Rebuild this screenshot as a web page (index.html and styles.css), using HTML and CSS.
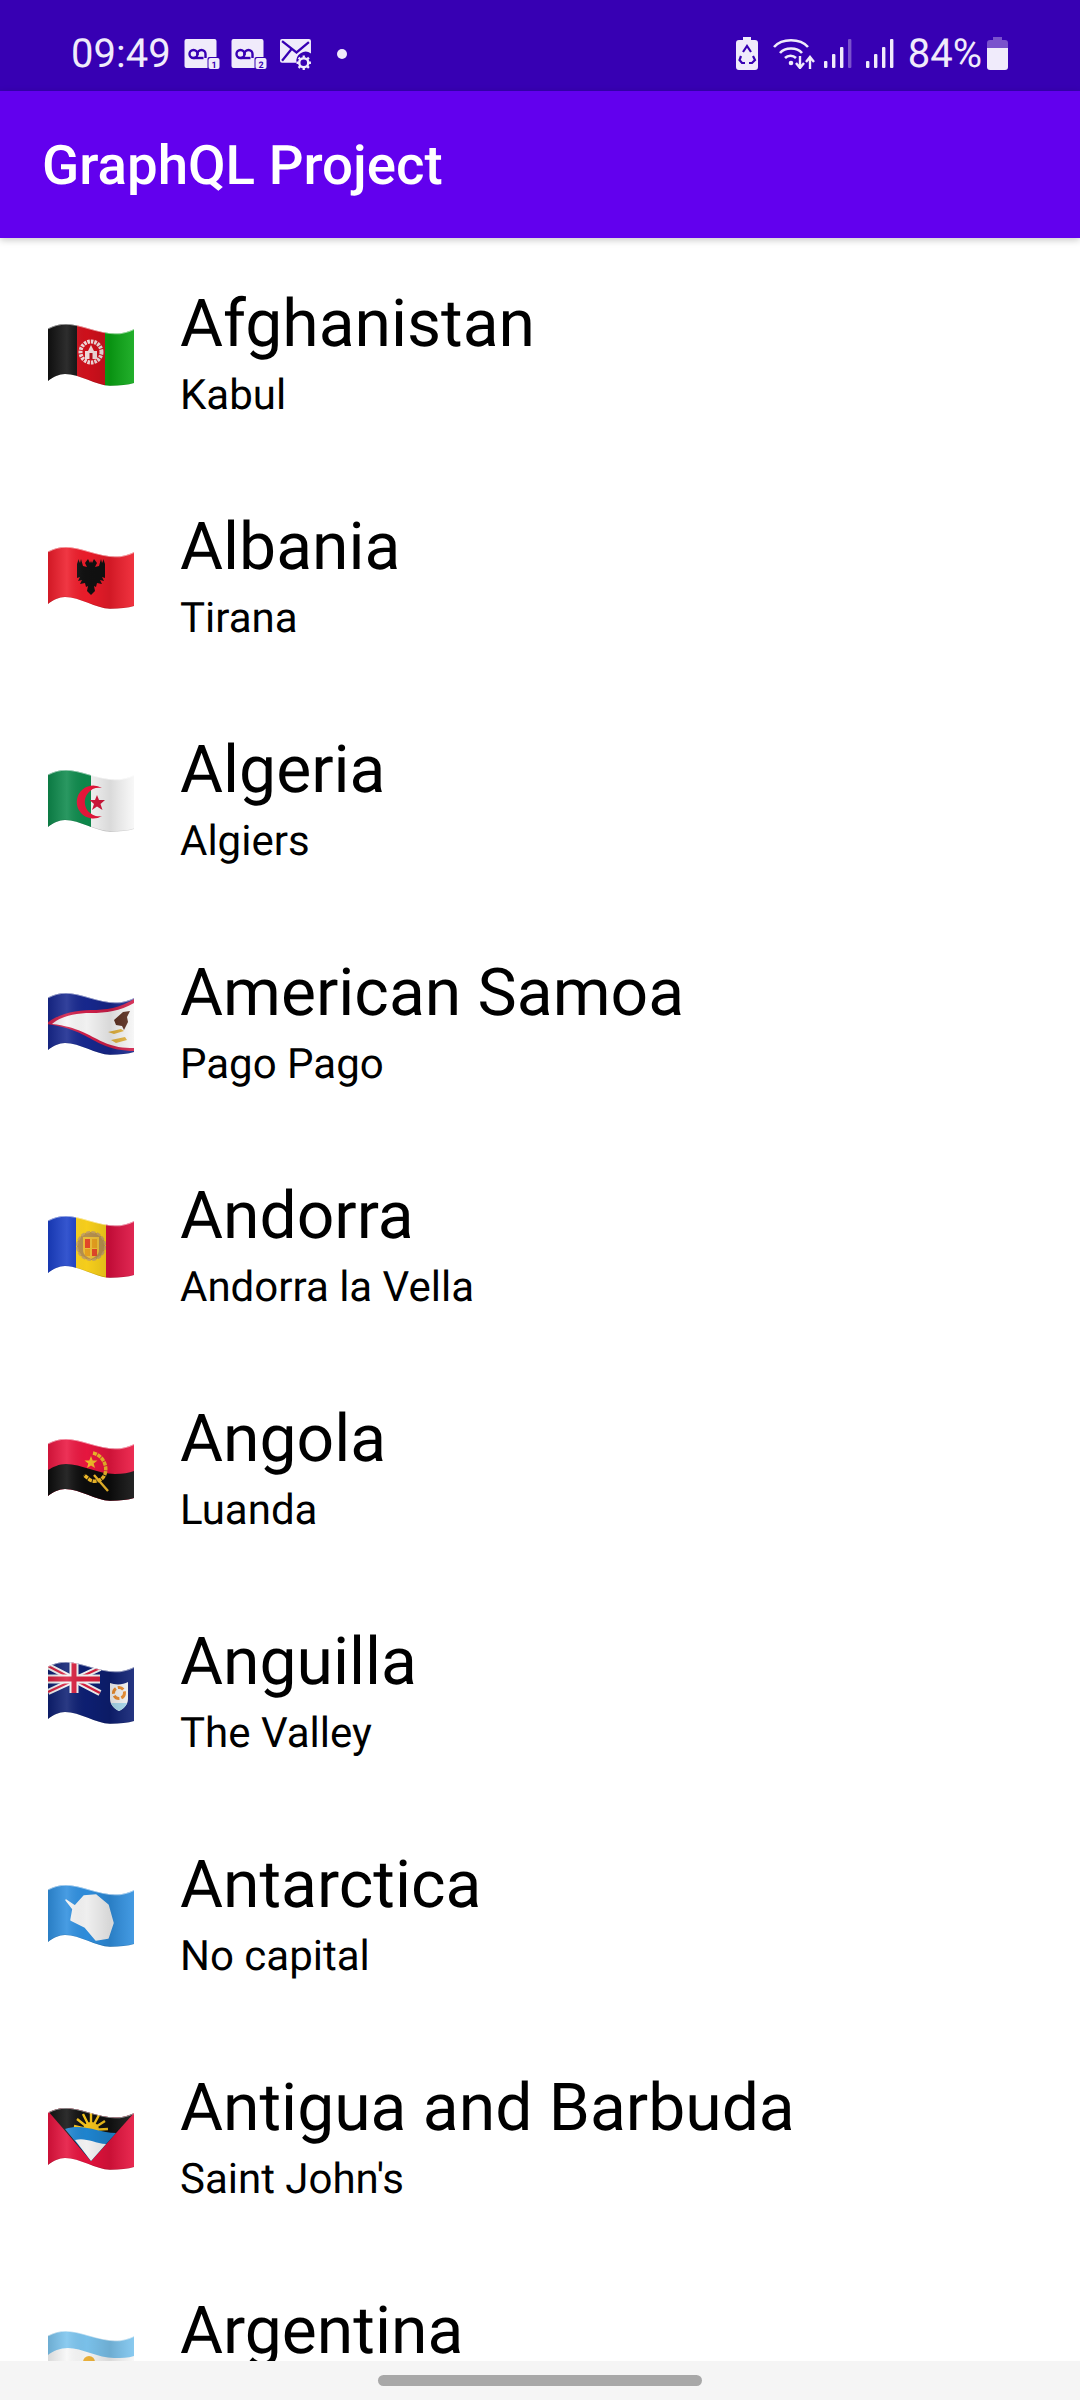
FILE: index.html
```html
<!DOCTYPE html>
<html lang="en">
<head>
    <meta charset="UTF-8">
    <meta name="viewport" content="width=device-width, initial-scale=1.0">
    <title>GraphQL Project</title>
    <link rel="stylesheet" href="styles.css">
</head>
<body>
    <!-- shared flag shape and folds -->
    <svg class="defs" aria-hidden="true">
        <defs>
            <clipPath id="wave">
                <path d="M0 5.5C5 3 11 1 18 1C33 1 50 10.5 67 10.5C75 10.5 81 8.500 86 6V60C80 62 72 62.7 62 62.7C48 62.7 32 51 17 51C11 51 5 54 0 58Z"/>
            </clipPath>
            <linearGradient id="folds" x1="0" x2="1" y1="0" y2="0">
                <stop offset="0" stop-color="#000" stop-opacity=".12"/>
                <stop offset=".22" stop-color="#fff" stop-opacity=".12"/>
                <stop offset=".45" stop-color="#000" stop-opacity=".02"/>
                <stop offset=".72" stop-color="#000" stop-opacity=".12"/>
                <stop offset="1" stop-color="#fff" stop-opacity=".1"/>
            </linearGradient>
            <g id="sheen">
                <rect width="86" height="64" fill="url(#folds)"/>
                <path d="M0 5.5C5 3 11 1 18 1C33 1 50 10.5 67 10.5C75 10.5 81 8.500 86 6" fill="none" stroke="#fff" stroke-opacity=".55" stroke-width="1.6"/>
                <path d="M86 60C80 62 72 62.7 62 62.7C48 62.7 32 51 17 51C11 51 5 54 0 58" fill="none" stroke="#000" stroke-opacity=".15" stroke-width="1.2"/>
            </g>
        </defs>
    </svg>

    <div class="status-bar">
        <div class="status-left">
            <span class="status-time">09:49</span>
            <svg class="ic-vm" viewBox="0 0 36 30">
                <path d="M3 0H31A2 2 0 0 1 33 2V18H26A2 2 0 0 0 24 20V29H3A2 2 0 0 1 1 27V2A2 2 0 0 1 3 0Z" fill="#f0ebfb"/>
                <circle cx="10" cy="15" r="4" fill="none" stroke="#3700b3" stroke-width="2.4"/>
                <path d="M22 19V15A4 4 0 1 0 14 15V16" fill="none" stroke="#3700b3" stroke-width="2.4"/>
                <path d="M10 19H20" stroke="#3700b3" stroke-width="2.4"/>
                <rect x="25" y="19" width="11" height="11" rx="2" fill="#f0ebfb"/>
                <text x="30.5" y="28.5" class="ic-num">1</text>
            </svg>
            <svg class="ic-vm" viewBox="0 0 36 30">
                <path d="M3 0H31A2 2 0 0 1 33 2V18H26A2 2 0 0 0 24 20V29H3A2 2 0 0 1 1 27V2A2 2 0 0 1 3 0Z" fill="#f0ebfb"/>
                <circle cx="10" cy="15" r="4" fill="none" stroke="#3700b3" stroke-width="2.4"/>
                <path d="M22 19V15A4 4 0 1 0 14 15V16" fill="none" stroke="#3700b3" stroke-width="2.4"/>
                <path d="M10 19H20" stroke="#3700b3" stroke-width="2.4"/>
                <rect x="25" y="19" width="11" height="11" rx="2" fill="#f0ebfb"/>
                <text x="30.5" y="28.5" class="ic-num">2</text>
            </svg>
            <svg class="ic-mail" viewBox="0 0 31 31">
                <path d="M2 0H28A2 2 0 0 1 30 2V14A9 9 0 0 0 16 23H2A2 2 0 0 1 0 21V2A2 2 0 0 1 2 0Z" fill="#f0ebfb"/>
                <path d="M2 2L16 13L28 3M2 21L11 10" fill="none" stroke="#3700b3" stroke-width="2.2"/>
                <circle cx="23" cy="23" r="4.4" fill="none" stroke="#f0ebfb" stroke-width="2.4"/>
                <path d="M23 16V18M23 28V30M16 23H18M28 23H30M18 18L19.5 19.5M26.5 26.5L28 28M28 18L26.5 19.5M19.5 26.5L18 28" stroke="#f0ebfb" stroke-width="2.2"/>
            </svg>
            <span class="status-dot"></span>
        </div>
        <div class="status-right">
            <svg class="ic-recycle" viewBox="0 0 22 33">
                <path d="M7 0H15V3H19A3 3 0 0 1 22 6V30A3 3 0 0 1 19 33H3A3 3 0 0 1 0 30V6A3 3 0 0 1 3 3H7Z" fill="#f0ebfb"/>
                <path d="M7 15L11 9L15 15M17 19L19 23L16 26H13M9 26H6L3.5 23L5 19" fill="none" stroke="#3700b3" stroke-width="2.2"/>
            </svg>
            <svg class="ic-wifi" viewBox="0 0 42 31">
                <g fill="none" stroke="#f0ebfb" stroke-width="2.6">
                    <path d="M1 9C9 0 27 0 35 9"/>
                    <path d="M7 15C12 9 24 9 29 15"/>
                    <path d="M12 20C15 17 20 17 23 20"/>
                </g>
                <circle cx="18" cy="25" r="2.3" fill="#f0ebfb"/>
                <path d="M27 18V29M23 25L27 30L31 25M37 31V20M33 24L37 19L41 24" fill="none" stroke="#f0ebfb" stroke-width="2.4"/>
            </svg>
            <svg class="ic-signal" viewBox="0 0 28 29">
                <rect x="0" y="22" width="3.4" height="7" rx="1" fill="#f0ebfb"/>
                <rect x="8" y="15" width="3.4" height="14" rx="1" fill="#f0ebfb"/>
                <rect x="16" y="8" width="3.4" height="21" rx="1" fill="#f0ebfb"/>
                <rect x="24" y="0" width="3.4" height="29" rx="1" fill="#7a52cc"/>
            </svg>
            <svg class="ic-signal ic-signal-b" viewBox="0 0 28 29">
                <rect x="0" y="22" width="3.4" height="7" rx="1" fill="#f0ebfb"/>
                <rect x="8" y="15" width="3.4" height="14" rx="1" fill="#f0ebfb"/>
                <rect x="16" y="8" width="3.4" height="21" rx="1" fill="#f0ebfb"/>
                <rect x="24" y="0" width="3.4" height="29" rx="1" fill="#f0ebfb"/>
            </svg>
            <span class="status-pct">84%</span>
            <svg class="ic-battery" viewBox="0 0 21 33">
                <path d="M6 0H15V3H18A3 3 0 0 1 21 6V11H0V6A3 3 0 0 1 3 3H6Z" fill="#7a52cc"/>
                <path d="M0 11H21V30A3 3 0 0 1 18 33H3A3 3 0 0 1 0 30Z" fill="#f0ebfb"/>
            </svg>
        </div>
    </div>

    <div class="app-bar">GraphQL Project</div>

    <div class="list">
        <div class="row">
            <svg class="flag" viewBox="0 0 86 64">
                <g clip-path="url(#wave)">
                    <rect width="29" height="64" fill="#111"/>
                    <rect x="29" width="28" height="64" fill="#d1101c"/>
                    <rect x="57" width="29" height="64" fill="#0aa614"/>
                    <circle cx="43" cy="29" r="10.5" fill="none" stroke="#f3dcdc" stroke-width="4" stroke-dasharray="2.5 1"/>
                    <path d="M37 36V28H40L43 22L46 28H49V36Z" fill="#f3dcdc"/>
                    <rect x="41.5" y="30" width="3" height="6" fill="#b8101c"/>
                    <use href="#sheen"/>
                </g>
            </svg>
            <div class="row-text">
                <div class="name">Afghanistan</div>
                <div class="capital">Kabul</div>
            </div>
        </div>
        <div class="row">
            <svg class="flag" viewBox="0 0 86 64">
                <g clip-path="url(#wave)">
                    <rect width="86" height="64" fill="#ee1c2a"/>
                    <path d="M40 13L37 17L39 21L35 20L33 13L32 17L30 13V18L29 15V32L32 31L30 35L34 34L32 38L37 37L38 41L40 40L39 45L43 49L47 45L46 40L48 41L49 37L54 38L52 34L56 35L54 31L57 32V15L56 18V13L54 17L53 13L51 20L47 21L49 17L46 13L44 17L43 15L42 17Z" fill="#111"/>
                    <use href="#sheen"/>
                </g>
            </svg>
            <div class="row-text">
                <div class="name">Albania</div>
                <div class="capital">Tirana</div>
            </div>
        </div>
        <div class="row">
            <svg class="flag" viewBox="0 0 86 64">
                <g clip-path="url(#wave)">
                    <rect width="43" height="64" fill="#0d8a4c"/>
                    <rect x="43" width="43" height="64" fill="#f7f7f7"/>
                    <path d="M54 19A16.5 16.5 0 1 0 54 47A14.3 14.3 0 1 1 54 19Z" fill="#e8153a"/>
                    <path d="M49 26L51 31L57 31L52.5 35L54.5 41L49 37.5L44 41L46 35L41.5 31L47 31Z" fill="#d5173c"/>
                    <use href="#sheen"/>
                </g>
            </svg>
            <div class="row-text">
                <div class="name">Algeria</div>
                <div class="capital">Algiers</div>
            </div>
        </div>
        <div class="row">
            <svg class="flag" viewBox="0 0 86 64">
                <g clip-path="url(#wave)">
                    <rect width="86" height="64" fill="#17288f"/>
                    <path d="M-2 32C8 23 26 18 43 18C58 18 72 16 86 7V59C75 59 64 57 53 52C38 45 28 36 -2 32Z" fill="#d11f4a"/>
                    <path d="M4 32C12 25 26 21 43 21C58 21 72 19 86 11V56C75 56 66 55 55 50C40 43 30 35 4 32Z" fill="#f6f6f6"/>
                    <path d="M82 19L75 20L66 28L68 33L74 34L76 38L80 30L79 25Z" fill="#5a2d1e"/>
                    <path d="M60 40L73 37L76 39L66 42ZM63 48L77 45L79 48L68 51Z" fill="#e3b23c"/>
                    <use href="#sheen"/>
                </g>
            </svg>
            <div class="row-text">
                <div class="name">American Samoa</div>
                <div class="capital">Pago Pago</div>
            </div>
        </div>
        <div class="row">
            <svg class="flag" viewBox="0 0 86 64">
                <g clip-path="url(#wave)">
                    <rect width="28" height="64" fill="#1a3fc8"/>
                    <rect x="28" width="30" height="64" fill="#fbd21c"/>
                    <rect x="58" width="28" height="64" fill="#dc0f3f"/>
                    <circle cx="43" cy="31" r="14" fill="#b8924f" stroke="#c9a562" stroke-width="2" stroke-dasharray="4 1.5"/>
                    <path d="M35 22H51V35C51 40 47 42 43 44C39 42 35 40 35 35Z" fill="#f0c23a"/>
                    <rect x="37" y="24" width="5" height="9" fill="#e7492a"/>
                    <rect x="44" y="24" width="5" height="9" fill="#e9a21f"/>
                    <rect x="37" y="34" width="5" height="7" fill="#e9a21f"/>
                    <rect x="44" y="34" width="5" height="7" fill="#e7492a"/>
                    <use href="#sheen"/>
                </g>
            </svg>
            <div class="row-text">
                <div class="name">Andorra</div>
                <div class="capital">Andorra la Vella</div>
            </div>
        </div>
        <div class="row">
            <svg class="flag" viewBox="0 0 86 64">
                <g clip-path="url(#wave)">
                    <rect width="86" height="64" fill="#ea1640"/>
                    <path d="M0 32C5 29 11 26 18 26C33 26 50 36 67 36C75 36 81 35 86 33V64H0Z" fill="#0c0c0c"/>
                    <path d="M45 15C54 17 60 27 57 36C55 42 48 45 42 42L36 37" fill="none" stroke="#f2bb2a" stroke-width="3.5" stroke-dasharray="4 .8"/>
                    <path d="M43 18L44.7 22.5L49.5 22.5L45.7 25.5L47 30L43 27.5L39 30L40.3 25.5L36.5 22.5L41.3 22.5Z" fill="#f2bb2a"/>
                    <path d="M46 37L60 53" stroke="#f2bb2a" stroke-width="2.4"/>
                    <use href="#sheen"/>
                </g>
            </svg>
            <div class="row-text">
                <div class="name">Angola</div>
                <div class="capital">Luanda</div>
            </div>
        </div>
        <div class="row">
            <svg class="flag" viewBox="0 0 86 64">
                <g clip-path="url(#wave)">
                    <rect width="86" height="64" fill="#0d1f73"/>
                    <path d="M0 5L52 32M52 7L0 31" stroke="#f4f4f4" stroke-width="6"/>
                    <path d="M0 5L52 32M52 7L0 31" stroke="#d8203f" stroke-width="2.4"/>
                    <path d="M26 0V32M0 18H52" stroke="#f4f4f4" stroke-width="9"/>
                    <path d="M26 0V32M0 18H52" stroke="#d8203f" stroke-width="5"/>
                    <path d="M62 22C67 24 75 24 80 21V38C80 44 75 48 71 50C67 48 62 44 62 38Z" fill="#f5f5f5"/>
                    <path d="M63 42H79C77 47 73 49 71 50C69 49 65 47 63 42Z" fill="#a9dbef"/>
                    <circle cx="71" cy="32" r="5.5" fill="none" stroke="#ea8a2a" stroke-width="3" stroke-dasharray="6 2"/>
                    <use href="#sheen"/>
                </g>
            </svg>
            <div class="row-text">
                <div class="name">Anguilla</div>
                <div class="capital">The Valley</div>
            </div>
        </div>
        <div class="row">
            <svg class="flag" viewBox="0 0 86 64">
                <g clip-path="url(#wave)">
                    <rect width="86" height="64" fill="#2f8fdf"/>
                    <path d="M18 16L27 22L36 12L48 11L60 21L65 39L60 54L48 56L37 43L23 36L25 25Z" fill="#f4f4f4" stroke="#f4f4f4" stroke-width="1.5" stroke-linejoin="round"/>
                    <use href="#sheen"/>
                </g>
            </svg>
            <div class="row-text">
                <div class="name">Antarctica</div>
                <div class="capital">No capital</div>
            </div>
        </div>
        <div class="row">
            <svg class="flag" viewBox="0 0 86 64">
                <g clip-path="url(#wave)">
                    <rect width="86" height="64" fill="#e5123d"/>
                    <path d="M0 4L43 54L86 6V0H0Z" fill="#111"/>
                    <path d="M43 23L43 6M43 23L35 7M43 23L51 8M43 23L29 12M43 23L57 14M43 23L26 19M43 23L60 22" stroke="#f8c51c" stroke-width="2.4"/>
                    <circle cx="43" cy="23" r="8" fill="#f8c51c"/>
                    <path d="M17 22C36 16 50 26 68 26L43 54Z" fill="#1f86d2"/>
                    <path d="M27 33C37 30 46 36 58 37L43 54Z" fill="#f6f6f6"/>
                    <use href="#sheen"/>
                </g>
            </svg>
            <div class="row-text">
                <div class="name">Antigua and Barbuda</div>
                <div class="capital">Saint John's</div>
            </div>
        </div>
        <div class="row">
            <svg class="flag" viewBox="0 0 86 64">
                <g clip-path="url(#wave)">
                    <rect width="86" height="64" fill="#f7f7f7"/>
                    <path d="M0 5.5C5 3 11 1 18 1C33 1 50 10.5 67 10.5C75 10.5 81 8.500 86 6V26C80 28 74 28 66 28C50 28 34 18 20 18C12 18 5 21 0 25Z" fill="#7cc4ee"/>
                    <circle cx="41" cy="32" r="6" fill="#eeb33b"/>
                    <use href="#sheen"/>
                </g>
            </svg>
            <div class="row-text">
                <div class="name">Argentina</div>
            </div>
        </div>
    </div>

    <div class="nav-bar">
        <span class="nav-pill"></span>
    </div>
</body>
</html>
```

FILE: styles.css
```css
* {
    box-sizing: border-box;
    font-family: Roboto, sans-serif;
    text-rendering: geometricPrecision;
}

body {
    margin: 0;
    height: 2400px;
    display: flex;
    flex-direction: column;
    overflow: hidden;
    background-color: #fff;
}

.defs {
    width: 0;
    height: 0;
    flex: none;
}

.status-bar {
    flex: none;
    height: 91px;
    padding: 37px 72px 0 71px;
    display: flex;
    justify-content: space-between;
    align-items: flex-start;
    background-color: #3700b3;
    color: #f0ebfb;
}

.status-left,
.status-right {
    display: flex;
    align-items: flex-start;
}

.status-time {
    font-size: 40px;
    line-height: 33px;
    margin-right: 12px;
}

.status-pct {
    font-size: 40px;
    line-height: 33px;
    margin: 0 5px 0 14px;
}

.ic-vm {
    width: 37px;
    height: 30px;
    margin: 2px 10px 0 0;
}

.ic-mail {
    width: 32px;
    height: 32px;
    margin: 2px 0 0 3px;
}

.ic-num {
    font-size: 9px;
    font-weight: 700;
    text-anchor: middle;
    fill: #3700b3;
}

.status-dot {
    width: 10px;
    height: 10px;
    margin: 12px 0 0 25px;
    border-radius: 50%;
    background-color: #f0ebfb;
}

.ic-recycle {
    width: 22px;
    height: 33px;
}

.ic-wifi {
    width: 42px;
    height: 31px;
    margin: 1px 9px 0 15px;
}

.ic-signal {
    width: 28px;
    height: 29px;
    margin-top: 2px;
}

.ic-signal-b {
    margin-left: 14px;
}

.ic-battery {
    width: 21px;
    height: 33px;
}

.app-bar {
    flex: none;
    position: relative;
    height: 147px;
    padding: 43px 0 0 42px;
    background-color: #6200ee;
    color: #fff;
    font-size: 54.6px;
    line-height: 64px;
    font-weight: 500;
    box-shadow: 0 2px 7px rgba(0, 0, 0, .22);
}

.list {
    flex: 1;
    min-height: 0;
    overflow: hidden;
}

.row {
    height: 223px;
    padding: 48px 0 0 48px;
    display: flex;
    align-items: flex-start;
}

.flag {
    flex: none;
    width: 86px;
    height: 64px;
    margin: 37px 46px 0 0;
    filter: blur(.4px);
}

.name {
    font-size: 66px;
    line-height: 77px;
    color: #000;
}

.capital {
    margin-top: 8px;
    font-size: 42px;
    line-height: 49px;
    color: #000;
}

.nav-bar {
    flex: none;
    height: 39px;
    padding-top: 14px;
    display: flex;
    justify-content: center;
    align-items: flex-start;
    background-color: #f5f5f5;
}

.nav-pill {
    width: 324px;
    height: 11px;
    border-radius: 6px;
    background-color: #a8a8a8;
}
```
